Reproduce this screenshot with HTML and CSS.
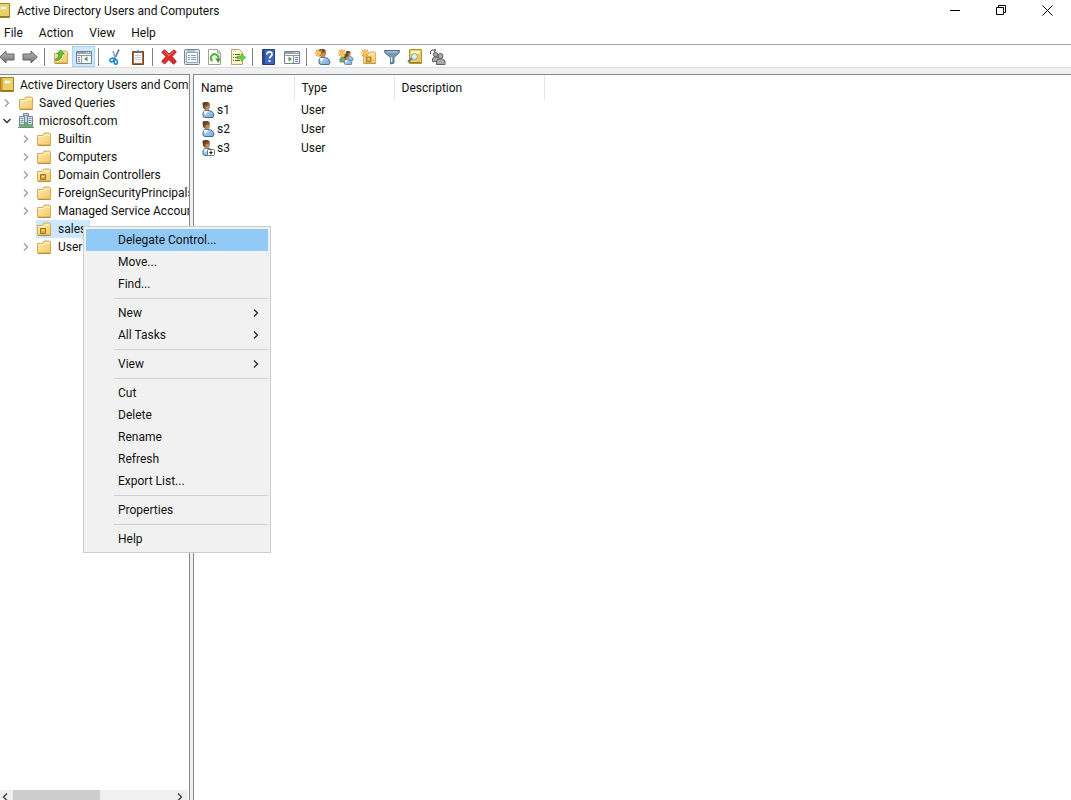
FILE: index.html
```html
<!DOCTYPE html>
<html lang="en">
<head>
<meta charset="utf-8">
<title>Active Directory Users and Computers</title>
<link rel="stylesheet" href="styles.css">
</head>
<body>
<svg class="sprite" aria-hidden="true">
  <defs>
    <linearGradient id="gold" x1="0" y1="0" x2="1" y2="1"><stop offset="0" stop-color="#ffeeb0"/><stop offset="1" stop-color="#f0c766"/></linearGradient>
    <linearGradient id="steel" x1="0" y1="0" x2="0" y2="1"><stop offset="0" stop-color="#bdbdbd"/><stop offset="1" stop-color="#6f6f6f"/></linearGradient>
    <linearGradient id="shirt" x1="0" y1="0" x2="1" y2="1"><stop offset="0" stop-color="#c4def3"/><stop offset="1" stop-color="#6ea7d8"/></linearGradient>
    <linearGradient id="hair" x1="0" y1="0" x2="1" y2="1"><stop offset="0" stop-color="#3d2a18"/><stop offset=".5" stop-color="#7a5433"/><stop offset="1" stop-color="#c99767"/></linearGradient>
    <symbol id="folder" viewBox="0 0 16 16"><path d="M1.500 4.500h5l1.500-2.500h5.500l1 1v11h-13z" fill="url(#gold)" stroke="#d3aa55"/><path d="M2.500 5.500h5l1.500-1.500h5" fill="none" stroke="#fff6d2"/><path d="M2 14.500h12.500" stroke="#b98f3c"/></symbol>
    <symbol id="ou" viewBox="0 0 16 16"><use href="#folder"/><path d="M4.500 7.500h5v5h-5z" fill="#d8ab3c" stroke="#9c7420"/><path d="M6 9.500h2" stroke="#fff4c0"/></symbol>
    <symbol id="console" viewBox="0 0 16 16"><path d="M1.500.500h13v14h-13z" fill="#edcf68" stroke="#a58224"/><path d="M2 1h2v13H2z" fill="#d3a93c"/><path d="M5.500 3.500h6v3h-6z" fill="#fffbe0" stroke="#e8d894"/><path d="M2 13.500h12" stroke="#8f7528"/></symbol>
    <symbol id="domain" viewBox="0 0 16 16"><path d="M5.500.500h5v9h-5z" fill="#c9dae6" stroke="#72868f"/><path d="M1.500 3.500h5v10h-5zM9.500 3.500h5v10h-5z" fill="#dce8e8" stroke="#72868f"/><path d="M6 2.500h4M2.500 5.500h3M10.500 5.500h3M2.500 7.500h3M10.500 7.500h3M2.500 9.500h3M10.500 9.500h3" stroke="#6d92bd"/><path d="M2 11h4v3H2zm8 0h4v3h-4zM7 9h2v5H7z" fill="#6fae6c"/><path d="M0 14.500h16" stroke="#688f78"/></symbol>
    <symbol id="person" viewBox="0 0 16 16"><path d="M2 14.500V11l1.500-2.500h5L11.500 10l1.500 3-1 2.500H4z" fill="url(#shirt)" stroke="#35608c" stroke-width=".9"/><path d="M3 9l1 4 3-4z" fill="#fff"/><path d="M1.500.800L4 0h3l1.800 1.500v4L7.500 8H4.500L2 6z" fill="url(#hair)"/><path d="M4.500 4.500c2 0 2.500-1 4-1v2.500L7 8.500H5z" fill="#c08c60"/></symbol>
    <symbol id="disabled" viewBox="0 0 16 16"><use href="#person"/><rect x="6.500" y="9.500" width="7" height="6" rx="1" fill="#fff" stroke="#6f7377"/><path d="M10 10.500v2" stroke="#222"/><path d="M8 12h4l-2 2.500z" fill="#222"/></symbol>
    <symbol id="star" viewBox="0 0 8 8"><path d="M4 0v8M0 4h8M1 1l6 6M7 1L1 7" stroke="#e5952f" stroke-width="1.200"/><circle cx="4" cy="4" r="2" fill="#ffc84d"/></symbol>
    <symbol id="back" viewBox="0 0 16 16"><path d="M.7 8L7 2v3h8v6H7v3z" fill="url(#steel)" stroke="#626262"/></symbol>
    <symbol id="forward" viewBox="0 0 16 16"><path d="M15.300 8L9 2v3H1v6h8v3z" fill="url(#steel)" stroke="#626262"/></symbol>
    <symbol id="up" viewBox="0 0 16 16"><use href="#folder"/><path d="M2.500 10c2.500-.5 3-2.500 3-5H3.500L7.500 1l4 4H9c0 4-2 6.500-6.500 6.500z" fill="#5cc236" stroke="#35881e" stroke-width=".6"/></symbol>
    <symbol id="panes" viewBox="0 0 16 16"><path d="M.5 2.500h15v12H.5z" fill="#fff" stroke="#77818b"/><path d="M1 3h14v2H1z" fill="#98a2ad"/><path d="M10 3.500h1m1 0h1m1 0h.6" stroke="#fff"/><path d="M1 6.500h14M5.500 7v7" stroke="#8d96a0"/><path d="M2 8.500h2m-2 2h2m-2 2h2" stroke="#637aa2"/></symbol>
    <symbol id="tree" viewBox="0 0 16 16"><use href="#panes"/><path d="M11.500 7.500v5l-3.500-2.500z" fill="#42a537"/></symbol>
    <symbol id="actions" viewBox="0 0 16 16"><path d="M.5 2.500h15v12H.5z" fill="#fff" stroke="#77818b"/><path d="M1 3h14v2H1z" fill="#98a2ad"/><path d="M10 3.500h1m1 0h1m1 0h.6" stroke="#fff"/><path d="M1 6.500h14M9.500 7v7" stroke="#8d96a0"/><path d="M11 8.500h3m-3 2h3m-3 2h3" stroke="#637aa2"/><path d="M4.500 7.500v5l3.500-2.500z" fill="#42a537"/></symbol>
    <symbol id="cut" viewBox="0 0 16 16"><path d="M12 .5L7.500 10" stroke="#6f8aa6" stroke-width="1.800"/><path d="M6 2l3 9" stroke="#8aa5bd" stroke-width="1.600"/><ellipse cx="5" cy="11" rx="2.200" ry="1.600" transform="rotate(-30 5 11)" fill="#fff" stroke="#1588d4" stroke-width="1.600"/><ellipse cx="8.800" cy="13" rx="1.600" ry="2.200" fill="#fff" stroke="#1588d4" stroke-width="1.600"/></symbol>
    <symbol id="paste" viewBox="0 0 16 16"><path d="M2.500 2.500h11v13h-11z" fill="#ae693b" stroke="#744323"/><path d="M4 4h8v10H4z" fill="#fafafa"/><path d="M5 4V2h2l1-1.500L9 2h2v2z" fill="#65717a"/><path d="M5 6.500h6m-6 2h6m-6 2h6" stroke="#c2cbd0"/></symbol>
    <symbol id="delete" viewBox="0 0 16 16"><path d="M3.500.8L8 5l5-4.200L15.300 3 11 7.500l4.300 5-2.800 2.700L8 10.500 3.500 15 .7 12.300 5 7.500.8 3.300z" fill="#df2c2c" stroke="#ac2020"/><path d="M3.500 2.300L8 6.500l4.500-4" fill="none" stroke="#f48a80"/></symbol>
    <symbol id="props" viewBox="0 0 16 16"><rect x=".5" y=".5" width="15" height="15" rx="1" fill="#dce5ed" stroke="#78858f"/><path d="M2.500 3.500h11v10h-11z" fill="#fff" stroke="#91a8ba"/><path d="M4 6.500h2m1 0h5M4 8.500h2m1 0h5M4 10.500h2m1 0h5M3 2h8" stroke="#7e9eb9"/></symbol>
    <symbol id="page" viewBox="0 0 16 16"><path d="M1.500.5h9l3 3v12h-12z" fill="#fffff7" stroke="#a0a39b"/><path d="M10.500 1v3h3" fill="#ededdf" stroke="#a0a39b"/></symbol>
    <symbol id="refresh" viewBox="0 0 16 16"><use href="#page"/><path d="M5.500 12A3.700 3.700 0 1 1 11 10.500" fill="none" stroke="#4cb33b" stroke-width="2"/><path d="M8 9.500h5.500L11.500 14z" fill="#3d9c30"/></symbol>
    <symbol id="export" viewBox="0 0 16 16"><path d="M1.500.5h8l3 3v12h-11z" fill="#fff6cc" stroke="#b1a77a"/><path d="M3 5.500h1m1 0h5m-7 3h1m1 0h4m-6 3h1m1 0h5" stroke="#675d45"/><path d="M7 7h4V4.500l5 4-5 4V10H7z" fill="#6ace3c" stroke="#51a729" stroke-width=".5"/></symbol>
    <symbol id="help" viewBox="0 0 16 16"><path d="M1.500.5h12v15h-12z" fill="#3d66bd" stroke="#233f80"/><path d="M2 1h2v14H2z" fill="#2c4991"/><path d="M6 5.500C6 2 11 2 11 5.200c0 2-2.500 2.300-2.500 4.300" fill="none" stroke="#fff" stroke-width="1.700"/><path d="M7.500 11h2v2h-2z" fill="#fff"/></symbol>
    <symbol id="newuser" viewBox="0 0 16 16"><use href="#person" x="2" width="16" height="16"/><use href="#star" width="8" height="8"/></symbol>
    <symbol id="newgroup" viewBox="0 0 16 16"><path d="M2 13V9.500L4 8h3l1 5z" fill="#74ad63" stroke="#4d8543" stroke-width=".8"/><use href="#person" x="7" y="2" width="10" height="10"/><use href="#person" x="5" y="5" width="11" height="11"/><use href="#star" width="8" height="8"/></symbol>
    <symbol id="newou" viewBox="0 0 16 16"><use href="#ou" x="1" y="1" width="15" height="15"/><use href="#star" width="8" height="8"/></symbol>
    <symbol id="filter" viewBox="0 0 16 16"><path d="M.7 1.500h14.600v2L10 8.500V14l-3.500 1V8.500L.7 3.500z" fill="#7597b5" stroke="#4e6c87"/><path d="M2.500 3h11" stroke="#c3d8e6"/><path d="M7.500 8v5" stroke="#dcecf5" stroke-width="1.300"/></symbol>
    <symbol id="find" viewBox="0 0 16 16"><path d="M2.500.5h12v14h-12z" fill="#eccb58" stroke="#b1943c"/><path d="M4 2h9v3H4z" fill="#fff3ae"/><path d="M2 13.500h12" stroke="#9a802f"/><path d="M5 9l-4 4" stroke="#657985" stroke-width="2"/><circle cx="7.500" cy="7.500" r="3" fill="#dff1f2" stroke="#819da0"/></symbol>
    <symbol id="addgroup" viewBox="0 0 16 16"><path d="M.5 5V2.500L2 1h3M4 0l2 1.200L4 3" fill="none" stroke="#4d4d4d"/><g fill="#aaa" stroke="#555" stroke-width=".9"><circle cx="5.500" cy="5.500" r="2.200"/><path d="M2.500 12.500V9.500L4 8h4v4.500z"/><circle cx="10.500" cy="7" r="2.500"/><path d="M6.500 15.500v-3.500L9 10h3.500l2.500 2v3.500z"/></g></symbol>
    <symbol id="chevron" viewBox="0 0 8 8"><path d="M2 .5L5.500 4 2 7.500" fill="none" stroke="currentColor" stroke-width="1.400"/></symbol>
  </defs>
</svg>

<header class="titlebar">
  <svg class="icon app-icon"><use href="#console"/></svg>
  <h1 class="title">Active Directory Users and Computers</h1>
  <div class="caption">
    <button class="caption-btn" aria-label="Minimize"><svg viewBox="0 0 11 11"><path d="M0 5.500h10"/></svg></button>
    <button class="caption-btn" aria-label="Restore"><svg viewBox="0 0 11 11"><path d="M.5 2.500h7v7h-7zM2.500 2.500v-2h7v7h-2"/></svg></button>
    <button class="caption-btn" aria-label="Close"><svg viewBox="0 0 11 11"><path d="M.5.5l10 10M10.500.5l-10 10"/></svg></button>
  </div>
</header>

<nav class="menubar">
  <button>File</button><button>Action</button><button>View</button><button>Help</button>
</nav>

<div class="toolbar" role="toolbar" aria-label="Standard">
  <button class="tool" aria-label="Back"><svg class="icon"><use href="#back"/></svg></button>
  <button class="tool" aria-label="Forward"><svg class="icon"><use href="#forward"/></svg></button>
  <span class="divider"></span>
  <button class="tool" aria-label="Up one level"><svg class="icon"><use href="#up"/></svg></button>
  <button class="tool pressed" aria-label="Show console tree" aria-pressed="true"><svg class="icon"><use href="#tree"/></svg></button>
  <span class="divider"></span>
  <button class="tool" aria-label="Cut"><svg class="icon"><use href="#cut"/></svg></button>
  <button class="tool" aria-label="Paste"><svg class="icon"><use href="#paste"/></svg></button>
  <span class="divider"></span>
  <button class="tool" aria-label="Delete"><svg class="icon"><use href="#delete"/></svg></button>
  <button class="tool" aria-label="Properties"><svg class="icon"><use href="#props"/></svg></button>
  <button class="tool" aria-label="Refresh"><svg class="icon"><use href="#refresh"/></svg></button>
  <button class="tool" aria-label="Export list"><svg class="icon"><use href="#export"/></svg></button>
  <span class="divider"></span>
  <button class="tool" aria-label="Help"><svg class="icon"><use href="#help"/></svg></button>
  <button class="tool" aria-label="Show action pane"><svg class="icon"><use href="#actions"/></svg></button>
  <span class="divider"></span>
  <button class="tool" aria-label="New user"><svg class="icon"><use href="#newuser"/></svg></button>
  <button class="tool" aria-label="New group"><svg class="icon"><use href="#newgroup"/></svg></button>
  <button class="tool" aria-label="New organizational unit"><svg class="icon"><use href="#newou"/></svg></button>
  <button class="tool" aria-label="Filter"><svg class="icon"><use href="#filter"/></svg></button>
  <button class="tool" aria-label="Find"><svg class="icon"><use href="#find"/></svg></button>
  <button class="tool" aria-label="Add to group"><svg class="icon"><use href="#addgroup"/></svg></button>
</div>

<main class="workspace">
  <section class="tree-pane" aria-label="Console tree">
    <ul class="tree">
      <li class="node root"><svg class="icon"><use href="#console"/></svg><span class="label">Active Directory Users and Com</span></li>
      <li class="node top"><svg class="twisty"><use href="#chevron"/></svg><svg class="icon"><use href="#folder"/></svg><span class="label">Saved Queries</span></li>
      <li class="node top"><svg class="twisty open"><use href="#chevron"/></svg><svg class="icon"><use href="#domain"/></svg><span class="label">microsoft.com</span></li>
      <li class="node"><svg class="twisty"><use href="#chevron"/></svg><svg class="icon"><use href="#folder"/></svg><span class="label">Builtin</span></li>
      <li class="node"><svg class="twisty"><use href="#chevron"/></svg><svg class="icon"><use href="#folder"/></svg><span class="label">Computers</span></li>
      <li class="node"><svg class="twisty"><use href="#chevron"/></svg><svg class="icon"><use href="#ou"/></svg><span class="label">Domain Controllers</span></li>
      <li class="node"><svg class="twisty"><use href="#chevron"/></svg><svg class="icon"><use href="#folder"/></svg><span class="label">ForeignSecurityPrincipals</span></li>
      <li class="node"><svg class="twisty"><use href="#chevron"/></svg><svg class="icon"><use href="#folder"/></svg><span class="label">Managed Service Accour</span></li>
      <li class="node"><span class="twisty"></span><span class="selected"><svg class="icon"><use href="#ou"/></svg><span class="label">sales</span></span></li>
      <li class="node"><svg class="twisty"><use href="#chevron"/></svg><svg class="icon"><use href="#folder"/></svg><span class="label">Users</span></li>
    </ul>
    <div class="scrollbar">
      <button class="scroll-btn" aria-label="Scroll left"><svg class="flip"><use href="#chevron"/></svg></button>
      <div class="track"><div class="thumb"></div></div>
      <button class="scroll-btn" aria-label="Scroll right"><svg><use href="#chevron"/></svg></button>
    </div>
  </section>

  <section class="list-pane" aria-label="Contents">
    <table class="list">
      <thead><tr><th class="col-name">Name</th><th class="col-type">Type</th><th class="col-desc">Description</th></tr></thead>
      <tbody>
        <tr><td><span class="entry"><svg class="icon"><use href="#person"/></svg>s1</span></td><td>User</td><td></td></tr>
        <tr><td><span class="entry"><svg class="icon"><use href="#person"/></svg>s2</span></td><td>User</td><td></td></tr>
        <tr><td><span class="entry"><svg class="icon"><use href="#disabled"/></svg>s3</span></td><td>User</td><td></td></tr>
      </tbody>
    </table>
  </section>
</main>

<div class="context-menu" role="menu">
  <button class="item active" role="menuitem">Delegate Control...</button>
  <button class="item" role="menuitem">Move...</button>
  <button class="item" role="menuitem">Find...</button>
  <hr>
  <button class="item" role="menuitem">New<svg><use href="#chevron"/></svg></button>
  <button class="item" role="menuitem">All Tasks<svg><use href="#chevron"/></svg></button>
  <hr>
  <button class="item" role="menuitem">View<svg><use href="#chevron"/></svg></button>
  <hr>
  <button class="item" role="menuitem">Cut</button>
  <button class="item" role="menuitem">Delete</button>
  <button class="item" role="menuitem">Rename</button>
  <button class="item" role="menuitem">Refresh</button>
  <button class="item" role="menuitem">Export List...</button>
  <hr>
  <button class="item" role="menuitem">Properties</button>
  <hr>
  <button class="item" role="menuitem">Help</button>
</div>
</body>
</html>
```
FILE: styles.css
```css
* { box-sizing: border-box; }

body {
  margin: 0;
  height: 100vh;
  display: flex;
  flex-direction: column;
  overflow: hidden;
  background: #f0f0f0;
  color: #111;
  font: 12px/18px Roboto, "Open Sans", sans-serif;
}

button {
  margin: 0;
  padding: 0;
  border: 0;
  background: none;
  color: inherit;
  font: inherit;
}

svg { display: block; flex: none; }
.sprite { position: absolute; width: 0; height: 0; }
.icon { width: 16px; height: 16px; }

/* Title bar */
.titlebar { display: flex; align-items: center; height: 22px; flex: none; background: #fff; }
.app-icon { margin-left: -5px; }
.title { margin: 0 0 0 6px; font-size: 12px; font-weight: 400; white-space: nowrap; }
.caption { display: flex; margin: 0 1px 2px auto; }
.caption-btn { display: flex; align-items: center; justify-content: center; width: 46px; height: 20px; }
.caption-btn svg { width: 11px; height: 11px; fill: none; stroke: #000; }

/* Menu bar */
.menubar { display: flex; gap: 16px; height: 22px; padding-left: 4px; align-items: center; flex: none; background: #fff; }

/* Toolbar */
.toolbar {
  display: flex;
  align-items: center;
  flex: none;
  height: 24px;
  margin-bottom: 6px;
  padding-top: 1px;
  border-top: 1px solid #a6a6a6;
  border-bottom: 1px solid #dcdcdc;
  background: #fff;
}
.tool { display: flex; align-items: center; justify-content: center; flex: none; width: 23px; height: 21px; padding-top: 1px; }
.tool:first-child { margin-left: -5px; }
.tool.pressed { background: #cce8ff; border: 1px solid #a3d3fa; }
.divider { width: 1px; height: 18px; margin: 0 4px 0 3px; background: #808080; flex: none; }

/* Panes */
.workspace { display: flex; flex: 1; min-height: 0; gap: 3px; }
.tree-pane {
  display: flex;
  flex-direction: column;
  flex: none;
  width: 190px;
  border-top: 1px solid #828790;
  border-right: 1px solid #828790;
  background: #fff;
}
.tree { flex: 1; margin: 0; padding: 1px 0 0; list-style: none; overflow: hidden; }
.node { display: flex; align-items: center; height: 18px; padding-left: 22px; white-space: nowrap; }
.node.top { padding-left: 3px; }
.node.root { padding-left: 0; }
.root .icon { margin-left: -1px; }
.root .label { padding-left: 5px; }
.twisty { width: 8px; height: 8px; margin-right: 6px; color: #a0a0a0; flex: none; }
.top .twisty { margin-right: 7px; }
.twisty.open { transform: rotate(90deg); color: #333; }
.label { padding-left: 6px; }
.top .label { padding-left: 5px; }
.selected { display: flex; align-items: center; height: 18px; padding-right: 4px; background: #cce8ff; }

.scrollbar { display: flex; flex: none; height: 10px; margin-right: 1px; background: #f0f0f0; overflow: hidden; }
.scroll-btn { width: 13px; padding: 3px 0 0 1px; color: #444; }
.scroll-btn svg { width: 8px; height: 8px; }
.flip { transform: scaleX(-1); }
.track { flex: 1; }
.thumb { width: 54%; height: 10px; background: #cdcdcd; }

.list-pane {
  flex: 1;
  border-top: 1px solid #828790;
  border-left: 1px solid #828790;
  background: #fff;
}
.list { border-collapse: collapse; table-layout: fixed; width: 350px; }
.list th { height: 25px; padding: 0 0 0 7px; border-right: 1px solid #e5e5e5; text-align: left; font-weight: 400; }
.list td { height: 19px; padding: 0 0 0 7px; }
.col-name { width: 100px; }
.col-type { width: 100px; }
.col-desc { width: 150px; }
.entry { display: flex; align-items: center; }

/* Context menu */
.context-menu {
  position: absolute;
  left: 83px;
  top: 226px;
  width: 188px;
  padding: 2px;
  border: 1px solid #ccc;
  background: #f1f1f1;
}
.item { display: flex; align-items: center; justify-content: space-between; width: 100%; height: 22px; padding: 0 8px 0 32px; }
.item svg { width: 8px; height: 8px; color: #333; }
.item.active { background: #91c9f7; }
.context-menu hr { height: 1px; margin: 3px 0 3px 28px; border: 0; background: #d0d0d0; }
```
